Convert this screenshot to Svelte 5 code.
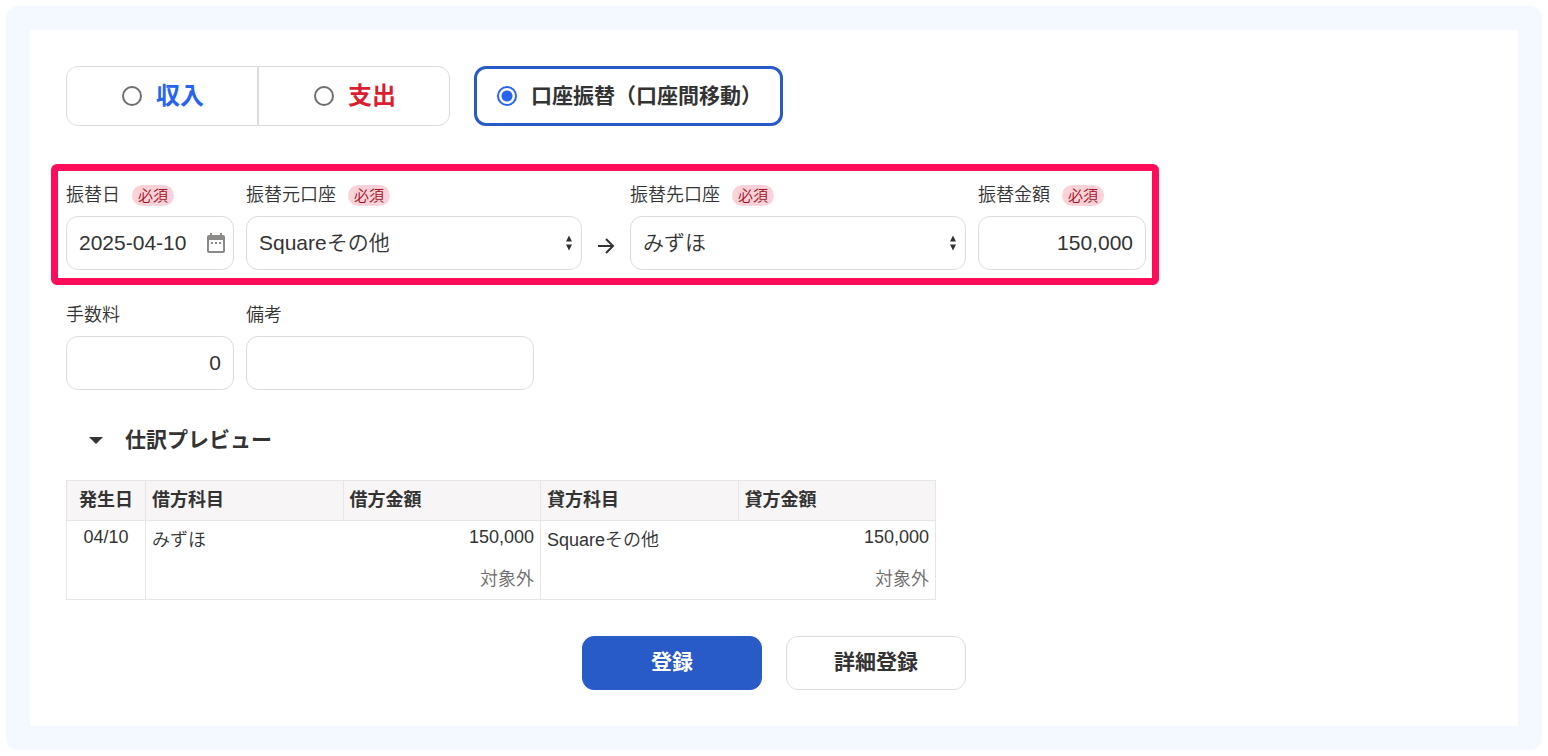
<script>
  let kind = $state('transfer');
  let form = $state({
    date: '2025-04-10',
    from: 'Squareその他',
    to: 'みずほ',
    amount: '150,000',
    fee: '0',
    memo: ''
  });

  const accounts = ['Squareその他', 'みずほ'];

  let day = $derived(form.date.slice(5).replace('-', '/'));
</script>

{#snippet required()}
  <span class="required">必須</span>
{/snippet}

{#snippet sortArrows()}
  <svg class="select-arrows" viewBox="0 0 8 16" aria-hidden="true">
    <path d="M4 0.5 L7 6.5 H1 Z M1 9.5 H7 L4 15.5 Z" />
  </svg>
{/snippet}

<div class="shell">
  <form class="card" onsubmit={(e) => e.preventDefault()}>
    <!-- Entry type -->
    <div class="kinds" role="radiogroup" aria-label="取引の種類">
      <div class="kind-group">
        <label class="kind income">
          <input type="radio" name="kind" value="income" bind:group={kind} />
          <span>収入</span>
        </label>
        <label class="kind expense">
          <input type="radio" name="kind" value="expense" bind:group={kind} />
          <span>支出</span>
        </label>
      </div>
      <label class="kind transfer" class:active={kind === 'transfer'}>
        <input type="radio" name="kind" value="transfer" bind:group={kind} />
        <span>口座振替（口座間移動）</span>
      </label>
    </div>

    <!-- Required fields -->
    <div class="highlight fields">
      <div class="field short">
        <div class="label-row"><label for="date">振替日</label>{@render required()}</div>
        <div class="control">
          <input id="date" type="text" bind:value={form.date} />
          <button class="calendar" type="button" aria-label="カレンダー">
            <svg viewBox="0 0 18 20" aria-hidden="true">
              <path
                fill-rule="evenodd"
                d="M3 0h2v2h8V0h2v2h1a2 2 0 0 1 2 2v14a2 2 0 0 1-2 2H2a2 2 0 0 1-2-2V4a2 2 0 0 1 2-2h1zM2 7v11h14V7zM4 9h2v2H4zM8 9h2v2H8zM12 9h2v2h-2z"
              />
            </svg>
          </button>
        </div>
      </div>

      <div class="field long">
        <div class="label-row"><label for="from">振替元口座</label>{@render required()}</div>
        <div class="control">
          <select id="from" bind:value={form.from}>
            {#each accounts as account}
              <option>{account}</option>
            {/each}
          </select>
          {@render sortArrows()}
        </div>
      </div>

      <svg class="arrow" viewBox="0 0 24 24" aria-hidden="true">
        <path d="M4 12h15M12 5l7 7-7 7" />
      </svg>

      <div class="field long">
        <div class="label-row"><label for="to">振替先口座</label>{@render required()}</div>
        <div class="control">
          <select id="to" bind:value={form.to}>
            {#each accounts as account}
              <option>{account}</option>
            {/each}
          </select>
          {@render sortArrows()}
        </div>
      </div>

      <div class="field short">
        <div class="label-row"><label for="amount">振替金額</label>{@render required()}</div>
        <input id="amount" class="number" type="text" bind:value={form.amount} />
      </div>
    </div>

    <!-- Optional fields -->
    <div class="fields">
      <div class="field short">
        <div class="label-row"><label for="fee">手数料</label></div>
        <input id="fee" class="number" type="text" bind:value={form.fee} />
      </div>
      <div class="field medium">
        <div class="label-row"><label for="memo">備考</label></div>
        <input id="memo" type="text" bind:value={form.memo} />
      </div>
    </div>

    <details open>
      <summary>
        <svg viewBox="0 0 14 8" aria-hidden="true"><path d="M0 1h14L7 8z" /></svg>
        仕訳プレビュー
      </summary>
      <table>
        <thead>
          <tr>
            <th class="day">発生日</th>
            <th>借方科目</th>
            <th>借方金額</th>
            <th>貸方科目</th>
            <th>貸方金額</th>
          </tr>
        </thead>
        <tbody>
          <tr>
            <td class="day">{day}</td>
            <td class="account">{form.to}</td>
            <td class="amount">{form.amount}<div class="tax">対象外</div></td>
            <td class="account">{form.from}</td>
            <td class="amount">{form.amount}<div class="tax">対象外</div></td>
          </tr>
        </tbody>
      </table>
    </details>

    <div class="actions">
      <button class="btn primary" type="submit">登録</button>
      <button class="btn" type="button">詳細登録</button>
    </div>
  </form>
</div>

<style>
  :global(body) {
    background: #fff;
  }

  .shell {
    margin: 6px;
    padding: 24px;
    border-radius: 12px;
    background: #f4f8ff;
  }

  .card {
    padding: 36px;
    background: #fff;
    color: #333;
    font-family: 'Liberation Sans', 'Noto Sans CJK JP', sans-serif;
    font-size: 18px;
    font-weight: 350;
  }

  input,
  select,
  button {
    box-sizing: border-box;
    margin: 0;
    color: inherit;
    font-family: inherit;
    font-size: 21px;
    font-weight: inherit;
  }

  .kinds {
    display: flex;
    flex-wrap: wrap;
    gap: 24px;
    margin-bottom: 38px;
  }

  .kind-group {
    display: flex;
  }

  .kind {
    display: flex;
    box-sizing: border-box;
    align-items: center;
    justify-content: center;
    gap: 14px;
    height: 60px;
    border: 1px solid #dcdcdc;
    font-weight: bold;
    cursor: pointer;
  }

  .kind span {
    line-height: 30px;
  }

  .income,
  .expense {
    width: 192px;
    padding-left: 2px;
    font-size: 24px;
  }

  .income {
    border-radius: 12px 0 0 12px;
    color: #2864f0;
  }

  .expense {
    border-radius: 0 12px 12px 0;
    color: #dc1e32;
  }

  .transfer {
    padding: 0 20px 0 22px;
    border-radius: 12px;
    font-size: 21px;
  }

  .transfer.active {
    padding: 0 18px 0 20px;
    border: 3px solid #285ac8;
  }

  input[type='radio'] {
    appearance: none;
    flex: none;
    width: 20px;
    height: 20px;
    border: 2px solid #6e6e6e;
    border-radius: 50%;
    background: #fff;
  }

  input[type='radio']:checked {
    border-color: #2864f0;
    background: radial-gradient(circle, #2864f0 5px, #fff 6px);
  }

  .fields {
    display: flex;
    flex-wrap: wrap;
    align-items: flex-end;
    gap: 12px;
  }

  .highlight {
    width: fit-content;
    margin: 0 -15px 17px;
    padding: 11px 6px 8px 8px;
    border: 7px solid #ff0d5b;
    border-radius: 6px;
  }

  .short {
    width: 168px;
  }

  .medium {
    width: 288px;
  }

  .long {
    width: 336px;
  }

  .label-row {
    display: flex;
    align-items: center;
    gap: 12px;
    margin-bottom: 8px;
    line-height: 26px;
  }

  .required {
    padding: 0 6px;
    border-radius: 11px;
    background: #fad2d7;
    color: #a50f23;
    font-size: 15px;
    line-height: 21px;
  }

  .control {
    position: relative;
  }

  input[type='text'],
  select {
    display: block;
    width: 100%;
    height: 54px;
    padding: 0 12px;
    border: 1px solid #dcdcdc;
    border-radius: 12px;
    background: #fff;
  }

  select {
    appearance: none;
    padding-bottom: 2px;
  }

  .number {
    text-align: right;
  }

  .calendar {
    position: absolute;
    top: 17px;
    right: 9px;
    width: 18px;
    height: 20px;
    padding: 0;
    border: 0;
    background: none;
  }

  .calendar svg {
    display: block;
    fill: #8c8989;
  }

  .select-arrows {
    position: absolute;
    top: 19px;
    right: 9px;
    width: 8px;
    height: 16px;
    fill: #323232;
    pointer-events: none;
  }

  .arrow {
    width: 24px;
    height: 24px;
    margin-bottom: 12px;
    fill: none;
    stroke: #323232;
    stroke-width: 2;
  }

  details {
    margin-top: 35px;
  }

  summary {
    display: flex;
    align-items: center;
    gap: 22px;
    margin-bottom: 25px;
    padding-left: 23px;
    font-size: 21px;
    font-weight: bold;
    line-height: 30px;
    list-style: none;
    cursor: pointer;
  }

  summary svg {
    width: 14px;
    height: 8px;
    fill: #323232;
  }

  table {
    width: 870px;
    max-width: 100%;
    border: 1px solid #e6e6e6;
    border-collapse: collapse;
    table-layout: fixed;
  }

  th,
  td {
    box-sizing: border-box;
    padding: 3px 6px;
    border-left: 1px solid #e6e6e6;
    line-height: 27px;
    text-align: left;
    vertical-align: top;
  }

  th {
    height: 40px;
    padding-top: 6px;
    border-bottom: 1px solid #e6e6e6;
    background: #f7f5f6;
  }

  td {
    height: 79px;
  }

  .day {
    width: 79px;
    text-align: center;
  }

  .account {
    padding-top: 6px;
  }

  .amount {
    border-left: 0;
    text-align: right;
  }

  .tax {
    margin-top: 15px;
    color: #6e6b6b;
  }

  .actions {
    display: flex;
    justify-content: center;
    gap: 24px;
    margin-top: 36px;
  }

  .btn {
    width: 180px;
    height: 54px;
    padding: 0 0 6px;
    border: 1px solid #dcdcdc;
    border-radius: 12px;
    background: #fff;
    font-weight: bold;
    cursor: pointer;
  }

  .primary {
    border-color: #285ac8;
    background: #285ac8;
    color: #fff;
  }
</style>
